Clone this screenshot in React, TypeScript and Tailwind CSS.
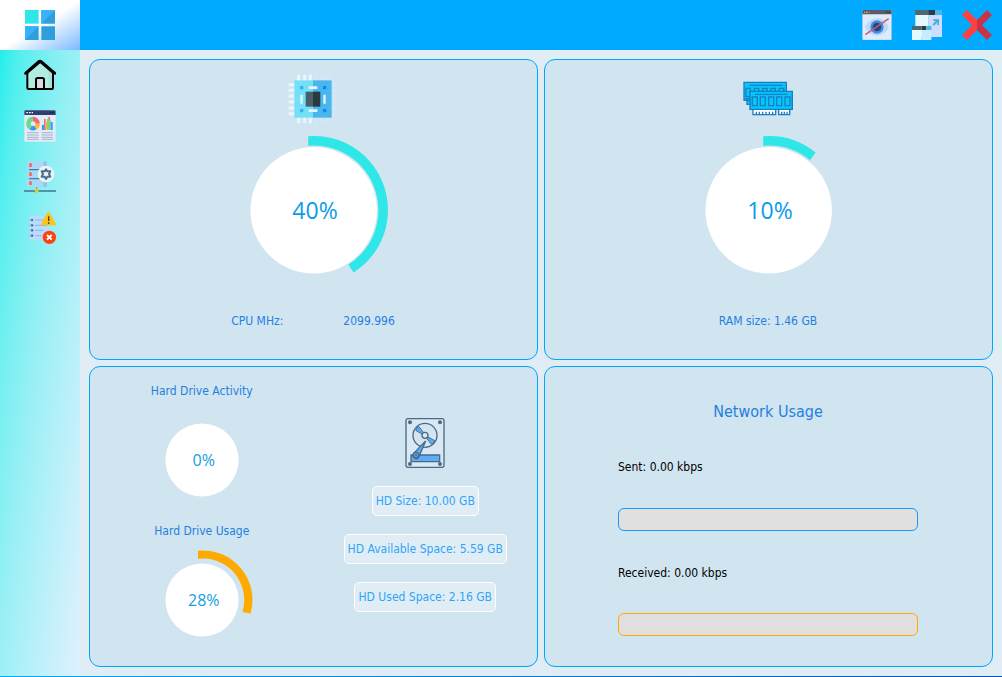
import type { ReactNode } from "react";

function LogoIcon() {
  return (
    <svg viewBox="0 0 90 90" className="size-[30px]" aria-hidden="true">
      <path fill="#2fe6e8" d="M0 0h41v41H0z" />
      <path fill="#2e9fdb" d="M49 0h41v41H49zM49 49h41v41H49zM0 49h41v41H0z" />
      <path fill="#37b2fb" d="M49 0h41L49 41zM0 49h41L0 90z" />
    </svg>
  );
}

function HomeIcon() {
  return (
    <svg viewBox="0 0 96 96" className="size-8" aria-hidden="true">
      <path d="M10 40 48 8l38 32v48q0 3-3 3H13q-3 0-3-3z" fill="#b0ece2" />
      <path d="M66 27l20 15v46q0 3-3 3h-9V40z" fill="#a0ddd6" opacity=".7" />
      <path d="M37 89V62q0-4 4-4h14q4 0 4 4v27z" fill="#dcdcdf" />
      <g fill="none" stroke="#000" strokeWidth="6" strokeLinejoin="round" strokeLinecap="round">
        <path d="M10 42v44q0 4 4 4h70q3 0 3-4V42" />
        <path d="M3 45V41L43 6q5-4 10 0l41 35v4l-7-2L50 11h-3L10 43z" strokeWidth="4" fill="#000" />
        <path d="M36 89V62q0-5 5-5h14q5 0 5 5v27" />
      </g>
    </svg>
  );
}

function ReportIcon() {
  return (
    <svg viewBox="0 0 96 96" className="size-8" aria-hidden="true">
      <rect x="1" y="1" width="94" height="94" rx="4" fill="#e3eaf8" />
      <path d="M1 15V5q0-4 4-4h86q4 0 4 4v10z" fill="#2f3f72" />
      <path d="M77 6h12v4H77z" fill="#1c2a55" />
      <path d="M7 6h5v4H7zM15 6h5v4h-5zM23 6h4v4h-4z" fill="#fff" />
      <g fill="none" strokeWidth="13">
        <path d="M27 27A14 14 0 0 1 41 41" stroke="#f8676f" />
        <path d="M41 41A14 14 0 0 1 34 53" stroke="#fdbb35" />
        <path d="M34 53A14 14 0 0 1 20 53" stroke="#2b9cf4" />
        <path d="M20 53A14 14 0 0 1 27 27" stroke="#6bdc8c" />
      </g>
      <path d="M54 45h6v15h-6z" fill="#2b9cf4" />
      <path d="M60 27h5v33h-5zM73 21h5v39h-5z" fill="#f8676f" />
      <path d="M65 34h8v26h-8z" fill="#fdbb35" />
      <path d="M75 29h5v31h-5z" fill="#6bdc8c" />
      <path d="M80 36h6v24h-6z" fill="#2b9cf4" />
      <path d="M69 27h5v33h-5z" fill="#6bdc8c" />
      <path
        d="M9 68h35M9 75h35M9 82h35M9 88h35M53 68h34M53 75h34M53 82h34M53 88h34"
        stroke="#a6b3ca"
        strokeWidth="3"
      />
    </svg>
  );
}

function ServerIcon() {
  return (
    <svg viewBox="0 0 96 96" className="size-8" aria-hidden="true">
      <g fill="#a9d9f7">
        <rect x="8" y="1" width="61" height="23" rx="4" />
        <rect x="8" y="28" width="61" height="23" rx="4" />
        <rect x="8" y="55" width="61" height="23" rx="4" />
      </g>
      <path d="M58 1h7q4 0 4 4v15q0 4-4 4h-7zM58 55h11v19q0 4-4 4h-7z" fill="#92c5e8" />
      <path d="M15 26h44M15 53h44" stroke="#47809e" strokeWidth="4" />
      <path d="M16 7h7v11h-7zM16 34h7v11h-7zM16 61h7v11h-7z" fill="#ff5c3f" />
      <path d="M0 90h96" stroke="#47809e" strokeWidth="5" />
      <path d="M38 78v8" stroke="#6faac8" strokeWidth="4" />
      <circle cx="38" cy="90" r="6" fill="#fdc113" />
      <circle cx="66" cy="39" r="25" fill="#eef3f7" />
      <path
        d="M66 25l4 6h9l-4 8 4 8h-9l-4 7-4-7h-9l4-8-4-8h9z"
        fill="none"
        stroke="#44718c"
        strokeWidth="6"
        strokeLinejoin="round"
      />
    </svg>
  );
}

function AlertIcon() {
  return (
    <svg viewBox="0 0 96 96" className="size-8" aria-hidden="true">
      <path d="M17 12h57v72H21q-4 0-4-4z" fill="#b9dcff" />
      <path d="M33 24h37M33 40h37M33 55h25M33 71h20" stroke="#84b9f2" strokeWidth="3" />
      <g fill="#4971a8">
        <circle cx="24" cy="24" r="4" />
        <circle cx="24" cy="40" r="4" />
        <circle cx="24" cy="55" r="4" />
        <circle cx="24" cy="71" r="4" />
      </g>
      <path d="M15 24h7M15 40h7M15 55h7M15 71h7" stroke="#a8b6ca" strokeWidth="3" />
      <path d="M70 2q4-4 7 0l19 34q1 4-3 4H53q-4 0-2-4z" fill="#fcc419" />
      <path d="M74 13v14M74 31v5" stroke="#44413a" strokeWidth="4" />
      <circle cx="76" cy="76" r="20" fill="#ff410d" />
      <path d="m69 69 14 14m0-14L69 83" stroke="#fff" strokeWidth="6" />
    </svg>
  );
}

function HideIcon() {
  return (
    <svg viewBox="0 0 90 90" className="size-[30px]" aria-hidden="true">
      <rect x="1" y="0" width="88" height="90" rx="3" fill="#deeaff" stroke="#7ab0df" />
      <path d="M1 13V3q0-3 3-3h82q3 0 3 3v10z" fill="#5a5a68" />
      <path d="M72 5h12v4H72z" fill="#3e3e4b" />
      <path d="M6 5h4v4H6z" fill="#7ac46c" />
      <path d="M13 5h4v4h-4z" fill="#f7c95c" />
      <path d="M20 5h4v4h-4z" fill="#ee6565" />
      <path d="M8 51q14-26 37-26t36 26Q68 77 45 77T8 51z" fill="#bedbee" />
      <circle cx="45" cy="51" r="20" fill="#4389f5" />
      <circle cx="45" cy="51" r="13" fill="#26476f" />
      <path d="M10 74 80 26" stroke="#cf5570" strokeWidth="4" />
    </svg>
  );
}

function RestoreIcon() {
  return (
    <svg viewBox="0 0 90 90" className="size-[30px]" aria-hidden="true">
      <path d="M10 15h40v66H10z" fill="#e3f8ff" />
      <path d="M50 15h40v66H50z" fill="#cddcff" />
      <path d="M10 0h40v15H10z" fill="#4f676e" />
      <path d="M50 0h19v15H50z" fill="#2b3c42" />
      <path d="M69 0h21v15H69z" fill="#47b7ee" />
      <path d="M64 28h17v17h-5v-8L66 47l-4-4 9-10h-7z" fill="#47add8" />
      <path d="M0 60h29v30H0z" fill="#e2fbff" />
      <path d="M29 60h29v30H29z" fill="#c8ecff" />
      <path d="M0 48h29v12H0z" fill="#4f676e" />
      <path d="M29 48h14v12H29z" fill="#2b3c42" />
      <path d="M43 48h15v12H43z" fill="#47b7ee" />
    </svg>
  );
}

function CloseIcon() {
  return (
    <svg viewBox="0 0 90 90" className="size-[30px]" aria-hidden="true">
      <path d="M15 0 45 30v30L15 90 0 75l30-30L0 15z" fill="#ff4040" />
      <path d="M75 0 45 30v30l30 30 15-15-30-30 30-30z" fill="#cc3245" />
    </svg>
  );
}

function ChipIcon() {
  return (
    <svg viewBox="0 0 150 150" className="size-[50px]" aria-hidden="true">
      <path
        d="M32 2v19M50 2v19M67 2v19M32 129v19M50 129v19M67 129v19M2 32h19M2 49h19M2 66h19M2 84h19M2 102h19M2 119h19"
        stroke="#eaf5ff"
        strokeWidth="9"
      />
      <path
        d="M84 2v19M102 2v19M119 2v19M84 129v19M102 129v19M119 129v19M129 32h19M129 49h19M129 66h19M129 84h19M129 102h19M129 119h19"
        stroke="#d2e6fc"
        strokeWidth="9"
      />
      <path d="M19 19h56v112H19z" fill="#73e0f8" />
      <path d="M75 19h56v112H75z" fill="#49b7ed" />
      <path d="M53 53h22v45H53z" fill="#49606a" />
      <path d="M75 53h22v45H75z" fill="#2b3a40" />
      <path d="M62 37h26v8H62zM62 106h26v8H62zM37 62h7v27h-7zM106 62h7v27h-7z" fill="#e3f5ff" />
      <path d="M36 36h10v10H36zM36 105h10v10H36z" fill="#3dadea" />
      <path d="M105 36h10v10h-10zM105 105h10v10h-10z" fill="#008eff" />
    </svg>
  );
}

function RamIcon() {
  return (
    <svg viewBox="0 0 150 150" className="size-[50px]" aria-hidden="true">
      <g fill="#00c8fb" stroke="#1c7dc4" strokeWidth="4">
        <path d="M10 74h20v17H12V80zM3 25h127v54H3z" />
        <path d="M9 43h13v25H9zM34 43h13v25H34zM59 43h13v25H59zM84 43h13v25H84zM109 43h13v25h-13z" />
        <path d="M19 34h99" />
        <path d="M30 103h68v19H30zM107 103h33v19h-33z" fill="#fff" />
        <path d="M40 122v-9M49 122v-9M59 122v-9M69 122v-9M79 122v-9M89 122v-9M116 122v-9M124 122v-9M132 122v-9" />
        <path d="M21 52h127v54H21z" />
        <path d="M28 69h15v26H28zM52 69h15v26H52zM77 69h15v26H77zM101 69h15v26h-15zM126 69h15v26h-15z" />
        <path d="M36 61h98" />
      </g>
    </svg>
  );
}

function DiskIcon() {
  return (
    <svg viewBox="0 0 150 150" className="size-[50px]" aria-hidden="true">
      <g stroke="#4d6a83" strokeWidth="4">
        <rect x="18" y="2" width="114" height="146" rx="6" fill="#d9e8f4" />
        <circle cx="75" cy="52" r="36" fill="#d4e5f1" />
        <path d="M66 48 47 37q3-8 9-12l14 18zM84 57l20 11q-3 8-9 12L80 61z" fill="#5aadfb" strokeWidth="3" />
        <circle cx="75" cy="52" r="9" fill="#d9e8f4" />
        <path d="M33 111h86v20H33z" fill="#5aadfb" />
        <path d="M77 69 41 106a9 9 0 0 0 15 12z" fill="#5aadfb" />
        <circle cx="48" cy="111" r="8" fill="#5aadfb" />
        <circle cx="48" cy="111" r="2" fill="#4d6a83" strokeWidth="2" />
      </g>
      <g fill="#4d6a83">
        <circle cx="30" cy="13" r="6" />
        <circle cx="120" cy="13" r="6" />
        <circle cx="30" cy="138" r="6" />
        <circle cx="120" cy="138" r="6" />
      </g>
    </svg>
  );
}

function Panel({ children }: { children: ReactNode }) {
  return (
    <section className="rounded-[11px] border border-[#00a5ff] bg-[#d1e5f0]">{children}</section>
  );
}

/* Large dial: disc of radius 63 with a 10px arc at radius 69. */
function LargeGauge({ value, arc }: { value: string; arc: string }) {
  return (
    <div className="mt-[11px] grid size-[150px] place-items-center">
      <svg
        viewBox="-76 -75 150 150"
        className="col-start-1 row-start-1 size-[150px] overflow-visible"
        aria-hidden="true"
      >
        <circle r="63.2" cx="-0.3" cy="0.3" fill="#fff" />
        <path d={arc} fill="#2fe6e8" />
      </svg>
      <span className="col-start-1 row-start-1 pl-1 font-['Open_Sans',sans-serif] text-[23px] leading-8 text-[#0a9ce8]">
        {value}
      </span>
    </div>
  );
}

function SmallGauge({ value, arc }: { value: string; arc?: string }) {
  return (
    <div className="mt-[7px] grid size-[104px] place-items-center">
      <svg viewBox="-52 -52 104 104" className="col-start-1 row-start-1 size-[104px]" aria-hidden="true">
        <circle r="36.6" fill="#fff" />
        {arc && <path d={arc} fill="#ffaa00" />}
      </svg>
      <span className="col-start-1 row-start-1 pl-1 font-['Open_Sans',sans-serif] text-[16px] leading-5 text-[#12a0e0]">
        {value}
      </span>
    </div>
  );
}

function NavButton({ label, children }: { label: string; children: ReactNode }) {
  return (
    <button type="button" aria-label={label} className="flex h-[50px] w-full items-center justify-center">
      {children}
    </button>
  );
}

function WindowButton({ label, children }: { label: string; children: ReactNode }) {
  return (
    <button type="button" aria-label={label} className="flex size-[50px] items-center justify-center">
      {children}
    </button>
  );
}

function Chip({ children }: { children: ReactNode }) {
  return (
    <p className="rounded-[5px] border border-white bg-[#e1edf5] px-[3px] leading-7 whitespace-nowrap text-[#2ea5fa]">
      {children}
    </p>
  );
}

export default function App() {
  return (
    <div className="flex min-h-screen flex-col bg-[#e1edf5] font-['DejaVu_Sans_Condensed','DejaVu_Sans',sans-serif] text-[12px] leading-5 text-[#2380e0]">
      <header className="flex h-[50px] bg-[#00aaff]">
        <div className="flex w-20 items-center justify-center bg-linear-to-br from-white from-50% to-[#7ab8ff]">
          <LogoIcon />
        </div>
        <div className="flex flex-1 justify-end">
          <WindowButton label="Minimize"><HideIcon /></WindowButton>
          <WindowButton label="Restore"><RestoreIcon /></WindowButton>
          <WindowButton label="Close"><CloseIcon /></WindowButton>
        </div>
      </header>

      <div className="flex flex-1">
        <nav className="flex w-20 flex-col gap-px bg-linear-to-br from-[#1ceeec] to-[#dff0ff]">
          <NavButton label="Home"><HomeIcon /></NavButton>
          <NavButton label="Reports"><ReportIcon /></NavButton>
          <NavButton label="Services"><ServerIcon /></NavButton>
          <NavButton label="Alerts"><AlertIcon /></NavButton>
        </nav>

        <main className="grid flex-1 grid-cols-2 grid-rows-2 gap-[6px] p-[9px]">
          <Panel>
            <div className="flex flex-col items-center pt-[14px] pr-px">
              <ChipIcon />
              <LargeGauge
                value="40%"
                arc="M-5.8 -73.8A74 74 0 0 1 39.7 62.4L34.3 54.6A64.5 64.5 0 0 0 -5.8 -64.2z"
              />
              <dl className="mt-[26px] flex gap-[60px]">
                <dt>CPU MHz:</dt>
                <dd>2099.996</dd>
              </dl>
            </div>
          </Panel>

          <Panel>
            <div className="flex flex-col items-center pt-[14px] pr-px">
              <RamIcon />
              <LargeGauge
                value="10%"
                arc="M-5.8 -73.8A74 74 0 0 1 46.6 -57.5L41 -49.8A64.5 64.5 0 0 0 -5.8 -64.2z"
              />
              <p className="mt-[26px]">RAM size: 1.46 GB</p>
            </div>
          </Panel>

          <Panel>
            <div className="grid grid-cols-2">
              <div className="flex flex-col items-center pt-[14px]">
                <h2>Hard Drive Activity</h2>
                <SmallGauge value="0%" />
                <h2 className="mt-[9px]">Hard Drive Usage</h2>
                <SmallGauge
                  value="28%"
                  arc="M-4 -49.3A49.5 49.5 0 0 1 48.6 13.4L40.4 12A41.5 41.5 0 0 0 -4 -41.3z"
                />
              </div>
              <div className="flex flex-col items-center gap-[18px] pt-[51px]">
                <DiskIcon />
                <Chip>HD Size: 10.00 GB</Chip>
                <Chip>HD Available Space: 5.59 GB</Chip>
                <Chip>HD Used Space: 2.16 GB</Chip>
              </div>
            </div>
          </Panel>

          <Panel>
            <div className="flex justify-center pr-px">
              <div className="flex w-[300px] flex-col pt-[33px]">
                <h2 className="text-center text-[16px] leading-6">Network Usage</h2>
                <label htmlFor="sent" className="mt-[33px] text-black">Sent: 0.00 kbps</label>
                <progress
                  id="sent"
                  value={0}
                  max={100}
                  className="mt-[31px] h-[23px] w-full appearance-none rounded-[6px] border border-[#2196f3] bg-[#e0e0e0] [&::-webkit-progress-bar]:bg-transparent"
                />
                <label htmlFor="received" className="mt-8 text-black">Received: 0.00 kbps</label>
                <progress
                  id="received"
                  value={0}
                  max={100}
                  className="mt-[30px] h-[23px] w-full appearance-none rounded-[6px] border border-[#ffaa00] bg-[#e0e0e0] [&::-webkit-progress-bar]:bg-transparent"
                />
              </div>
            </div>
          </Panel>
        </main>
      </div>
      <footer className="h-px bg-linear-to-r from-[#00aaff] to-[#0050b8]" />
    </div>
  );
}
